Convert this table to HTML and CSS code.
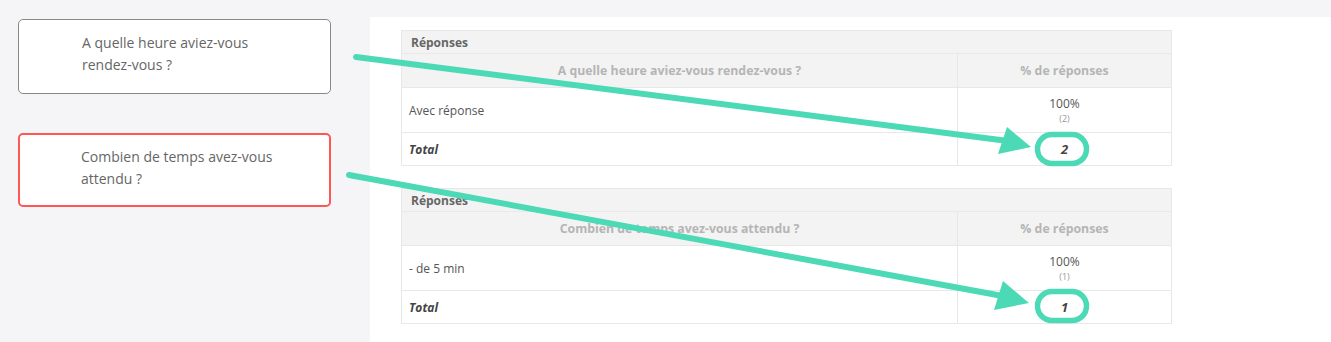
FILE: index.html
```html
<!DOCTYPE html>
<html lang="fr">
<head>
<meta charset="utf-8">
<title>Réponses</title>
<link rel="stylesheet" href="styles.css">
</head>
<body>
<div class="page">
  <aside class="left">
    <div class="card">A quelle heure aviez-vous rendez-vous ?</div>
    <div class="card card-active">Combien de temps avez-vous attendu ?</div>
  </aside>
  <main class="right">
    <table class="res">
      <thead>
        <tr class="title"><th colspan="2">Réponses</th></tr>
        <tr class="cols"><th class="c1">A quelle heure aviez-vous rendez-vous ?</th><th class="c2">% de réponses</th></tr>
      </thead>
      <tbody>
        <tr class="row"><td class="lbl">Avec réponse</td><td class="pct"><div class="p">100%</div><div class="n">(2)</div></td></tr>
        <tr class="tot"><td class="lbl">Total</td><td class="pct">2</td></tr>
      </tbody>
    </table>
    <table class="res">
      <thead>
        <tr class="title"><th colspan="2">Réponses</th></tr>
        <tr class="cols"><th class="c1">Combien de temps avez-vous attendu ?</th><th class="c2">% de réponses</th></tr>
      </thead>
      <tbody>
        <tr class="row"><td class="lbl">- de 5 min</td><td class="pct"><div class="p">100%</div><div class="n">(1)</div></td></tr>
        <tr class="tot"><td class="lbl">Total</td><td class="pct">1</td></tr>
      </tbody>
    </table>
  </main>
  <svg class="overlay" width="1331" height="342" viewBox="0 0 1331 342" aria-hidden="true">
    <g fill="none" stroke="#4cd9b6" stroke-width="5.5">
      <rect x="1037.5" y="134.5" width="49" height="29" rx="14.5"/>
      <rect x="1037.5" y="291.5" width="49" height="29" rx="14.5"/>
    </g>
    <g stroke="#4cd9b6" stroke-width="6" stroke-linecap="round">
      <line x1="356" y1="57" x2="1004" y2="140.5"/>
      <line x1="349" y1="175" x2="1000" y2="295.5"/>
    </g>
    <g fill="#4cd9b6">
      <polygon points="1007,127 998,154 1031,147"/>
      <polygon points="1003,281 994,310 1029,303"/>
    </g>
  </svg>
</div>
</body>
</html>
```
FILE: styles.css
```css
* { box-sizing: border-box; }
html, body { margin: 0; padding: 0; }
body {
  background: #f5f5f7;
  font-family: "Open Sans", "Liberation Sans", sans-serif;
  color: #555;
}
.page {
  position: relative;
  display: flex;
  width: 1331px;
  height: 342px;
  overflow: hidden;
}
.left {
  width: 370px;
  flex: none;
  padding: 19px 0 0 18px;
  display: flex;
  flex-direction: column;
  gap: 39px;
}
.card {
  width: 313px;
  height: 75px;
  background: #fff;
  border: 1px solid #888;
  border-radius: 5px;
  padding: 12px 30px 0 63px;
  font-size: 14px;
  line-height: 22px;
  color: #666;
}
.card-active {
  height: 74px;
  border: 2px solid #ff5656;
  padding: 11px 30px 0 61px;
}
.right {
  flex: 1;
  margin-top: 17px;
  background: #fff;
  padding: 13px 0 0 31px;
  display: flex;
  flex-direction: column;
  gap: 22px;
}
.res {
  width: 771px;
  border-collapse: collapse;
  border: 1px solid #e6e6e6;
  font-size: 12px;
}
.res th, .res td {
  border: 1px solid #e8e8e8;
  padding: 0;
}
.title th {
  background: #f3f3f3;
  height: 23px;
  text-align: left;
  padding-left: 9px;
  color: #666;
  font-weight: 700;
  border-bottom: 1px solid #e9e9e9;
}
.cols th {
  background: #f3f3f3;
  height: 34px;
  text-align: center;
  color: #b5b5b5;
  font-weight: 700;
  font-size: 12.3px;
}
.cols .c1 { width: 556px; }
.row td { height: 45px; }
.tot td { height: 33px; }
.lbl {
  padding-left: 7px !important;
  color: #555;
}
.tot .lbl, .tot .pct {
  font-weight: 700;
  font-style: italic;
  color: #444;
}
.tot .pct { font-size: 13px; }
.pct { text-align: center; }
.p { line-height: 14px; color: #555; }
.n { font-size: 9px; line-height: 11px; color: #999; margin-top: 2px; }
.overlay {
  position: absolute;
  left: 0;
  top: 0;
  pointer-events: none;
}
```
